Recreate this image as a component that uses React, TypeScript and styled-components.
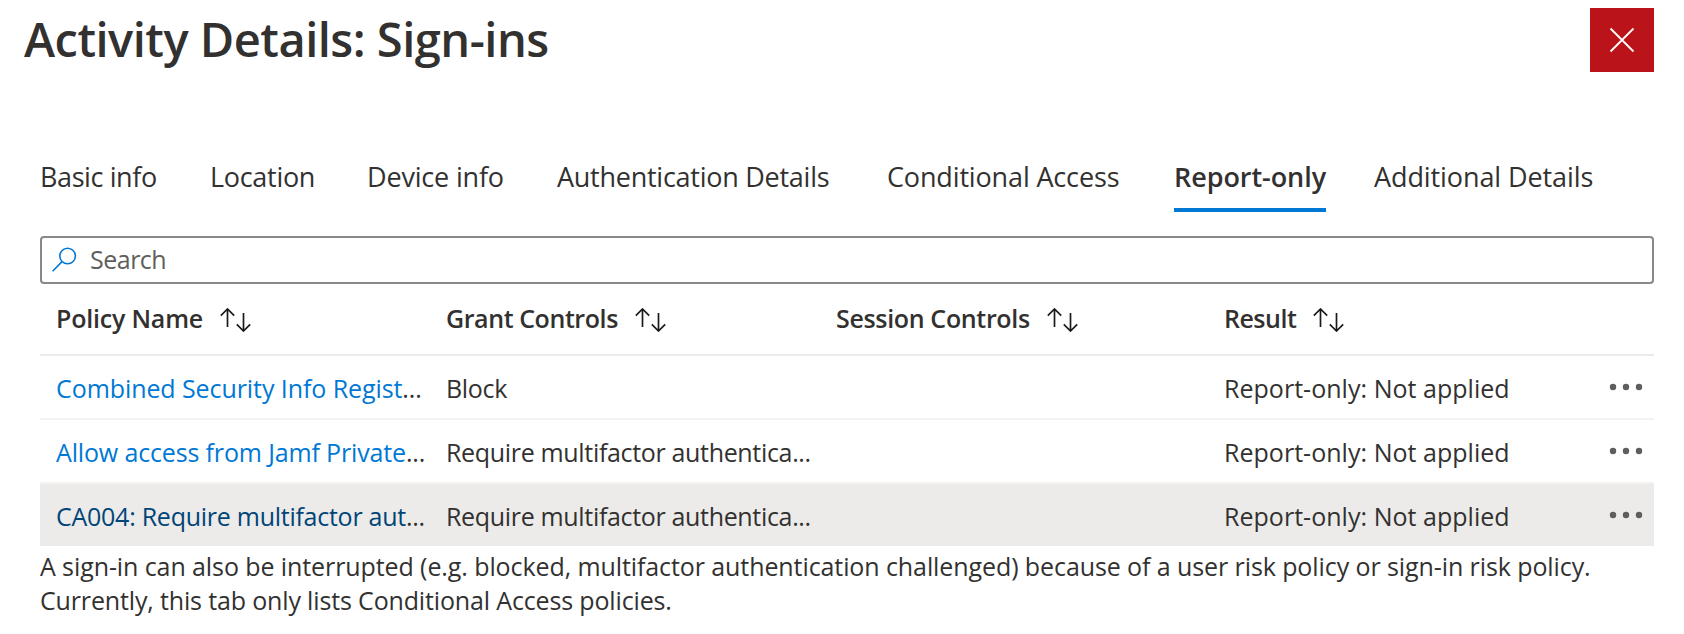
import styled, { createGlobalStyle } from "styled-components";

type TextProps = {
  $tracking?: number;
};

const GlobalStyle = createGlobalStyle`
  * {
    box-sizing: border-box;
  }

  body {
    margin: 0;
    background: #ffffff;
    color: #323130;
    font-family: "Segoe UI", "Open Sans", "Noto Sans", sans-serif;
    font-size: 25px;
  }
`;

const Blade = styled.main`
  height: 634px;
  padding: 8px 30px 0 24px;
  overflow: hidden;
`;

const Header = styled.header`
  display: flex;
  align-items: flex-start;
  justify-content: space-between;
  height: 64px;
`;

const Title = styled.h1`
  margin: 0;
  font-size: 47px;
  line-height: 62px;
  font-weight: 600;
  letter-spacing: -0.5px;
`;

const CloseButton = styled.button`
  display: flex;
  align-items: center;
  justify-content: center;
  width: 64px;
  height: 64px;
  padding: 0;
  border: 0;
  background: #ba141a;
`;

const Content = styled.section`
  padding-left: 16px;
`;

const Tabs = styled.nav`
  display: grid;
  grid-template-columns: 170px 157px 190px 330px 287px 200px auto;
  justify-items: start;
  margin-top: 84px;
`;

const Tab = styled.div<TextProps & { $active?: boolean }>`
  height: 56px;
  font-size: 27px;
  line-height: 41px;
  white-space: nowrap;
  letter-spacing: ${({ $tracking = 0 }) => $tracking}px;
  font-weight: ${({ $active }) => ($active ? 600 : 400)};
  border-bottom: 4px solid
    ${({ $active }) => ($active ? "#0078d4" : "transparent")};
`;

const SearchBox = styled.label`
  display: flex;
  align-items: center;
  gap: 12px;
  height: 48px;
  margin-top: 24px;
  padding-left: 10px;
  border: 2px solid #8a8886;
  border-radius: 4px;
  color: #605e5c;
  line-height: 34px;
  letter-spacing: -0.5px;
`;

const SearchText = styled.span`
  padding-bottom: 2px;
`;

const Row = styled.div<{ $selected?: boolean }>`
  display: grid;
  grid-template-columns: 390px 390px 388px 1fr 45px;
  height: ${({ $selected }) => ($selected ? 62 : 64)}px;
  padding-left: 16px;
  line-height: 65px;
  background: ${({ $selected }) => ($selected ? "#edebe9" : "#ffffff")};
  border-bottom: ${({ $selected }) => ($selected ? "0" : "2px solid #f3f2f1")};
`;

const HeaderRow = styled(Row)`
  height: 72px;
  line-height: 69px;
  font-weight: 600;
  border-bottom: 2px solid #edebe9;
`;

const HeaderCell = styled.div<TextProps>`
  display: flex;
  gap: 17px;
  white-space: nowrap;
  letter-spacing: ${({ $tracking = 0 }) => $tracking}px;

  svg {
    margin-top: 24px;
  }
`;

const Cell = styled.div<TextProps>`
  white-space: nowrap;
  letter-spacing: ${({ $tracking = 0 }) => $tracking}px;
`;

const PolicyLink = styled.a<{ $selected?: boolean }>`
  color: ${({ $selected }) => ($selected ? "#004578" : "#0078d4")};
`;

const MoreButton = styled.div`
  display: flex;
  padding-top: 27px;
`;

const Note = styled.div`
  padding-top: 3px;
  line-height: 34px;
`;

const NoteLine = styled.p<TextProps>`
  margin: 0;
  white-space: nowrap;
  letter-spacing: ${({ $tracking = 0 }) => $tracking}px;
`;

function SortIcon() {
  return (
    <svg width="32" height="24" fill="none" stroke="#1b1a19" strokeWidth="1.7">
      <path d="M7.5 19V1M.8 7.7l6.7-6.7 6.7 6.7M23.5 5v18M16.8 16.3l6.7 6.7 6.7-6.7" />
    </svg>
  );
}

function SearchIcon() {
  return (
    <svg width="26" height="26" fill="none" stroke="#0078d4" strokeWidth="1.6">
      <circle cx="15.6" cy="9" r="7.8" />
      <path d="M10 14.6L.6 24.2" />
    </svg>
  );
}

function CloseIcon() {
  return (
    <svg width="26" height="26" fill="none" stroke="#ffffff" strokeWidth="1.8">
      <path d="M1.5 1.5l23 23M24.5 1.5l-23 23" />
    </svg>
  );
}

function MoreIcon() {
  return (
    <svg width="34" height="8" fill="#605e5c">
      <circle cx="4" cy="4" r="3.2" />
      <circle cx="17" cy="4" r="3.2" />
      <circle cx="30" cy="4" r="3.2" />
    </svg>
  );
}

const tabs = [
  { name: "Basic info", tracking: -0.4 },
  { name: "Location", tracking: -0.3 },
  { name: "Device info", tracking: -0.18 },
  { name: "Authentication Details", tracking: -0.26 },
  { name: "Conditional Access", tracking: -0.15 },
  { name: "Report-only", tracking: -0.06 },
  { name: "Additional Details", tracking: -0.09 },
];

const columns = [
  { name: "Policy Name", tracking: -0.2 },
  { name: "Grant Controls", tracking: -0.42 },
  { name: "Session Controls", tracking: -0.34 },
  { name: "Result", tracking: -0.5 },
];

const policies = [
  {
    name: "Combined Security Info Regist",
    tracking: -0.08,
    grant: "Block",
    result: "Report-only: Not applied",
  },
  {
    name: "Allow access from Jamf Private",
    tracking: -0.15,
    grant: "Require multifactor authentica...",
    result: "Report-only: Not applied",
  },
  {
    name: "CA004: Require multifactor aut",
    tracking: -0.26,
    grant: "Require multifactor authentica...",
    result: "Report-only: Not applied",
    selected: true,
  },
];

export default function App() {
  return (
    <>
      <GlobalStyle />
      <Blade>
        <Header>
          <Title>Activity Details: Sign-ins</Title>
          <CloseButton aria-label="Close">
            <CloseIcon />
          </CloseButton>
        </Header>
        <Content>
          <Tabs>
            {tabs.map(({ name, tracking }) => (
              <Tab
                key={name}
                $tracking={tracking}
                $active={name === "Report-only"}
              >
                {name}
              </Tab>
            ))}
          </Tabs>
          <SearchBox>
            <SearchIcon />
            <SearchText>Search</SearchText>
          </SearchBox>
          <HeaderRow>
            {columns.map(({ name, tracking }) => (
              <HeaderCell key={name} $tracking={tracking}>
                {name}
                <SortIcon />
              </HeaderCell>
            ))}
          </HeaderRow>
          {policies.map(({ name, tracking, grant, result, selected }) => (
            <Row key={name} $selected={selected}>
              <Cell $tracking={tracking}>
                <PolicyLink $selected={selected}>{name}</PolicyLink>...
              </Cell>
              <Cell $tracking={-0.33}>{grant}</Cell>
              <Cell />
              <Cell $tracking={0.03}>{result}</Cell>
              <MoreButton>
                <MoreIcon />
              </MoreButton>
            </Row>
          ))}
          <Note>
            <NoteLine $tracking={-0.09}>
              A sign-in can also be interrupted (e.g. blocked, multifactor
              authentication challenged) because of a user risk policy or
              sign-in risk policy.
            </NoteLine>
            <NoteLine $tracking={-0.15}>
              Currently, this tab only lists Conditional Access policies.
            </NoteLine>
          </Note>
        </Content>
      </Blade>
    </>
  );
}
